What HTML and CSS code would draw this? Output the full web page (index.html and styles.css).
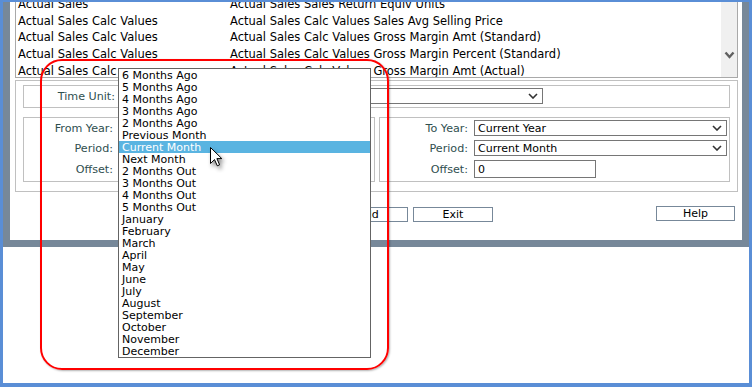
FILE: index.html
```html
<!DOCTYPE html>
<html>
<head>
<meta charset="utf-8">
<link rel="stylesheet" href="styles.css">
</head>
<body>
<div class="screen">
  <div class="dialog">
    <div class="listbox">
      <div class="rows">
        <div class="rows-inner">
          <div class="row"><span class="c1">Actual Sales</span><span>Actual Sales Sales Return Equiv Units</span></div>
          <div class="row"><span class="c1">Actual Sales Calc Values</span><span>Actual Sales Calc Values Sales Avg Selling Price</span></div>
          <div class="row"><span class="c1">Actual Sales Calc Values</span><span>Actual Sales Calc Values Gross Margin Amt (Standard)</span></div>
          <div class="row"><span class="c1">Actual Sales Calc Values</span><span>Actual Sales Calc Values Gross Margin Percent (Standard)</span></div>
          <div class="row"><span class="c1">Actual Sales Calc</span><span class="c2l">Actual Sales Calc Values Gross Margin Amt (Actual)</span></div>
        </div>
      </div>
      <div class="scrollbar">
        <svg width="11" height="8" viewBox="0 0 11 8"><polyline points="1.5,1.5 5.5,6 9.5,1.5" fill="none" stroke="#606060" stroke-width="2.4"/></svg>
      </div>
    </div>

    <div class="panel">
      <div class="box timebox">
        <span class="lbl">Time Unit:</span>
        <div class="select"><span></span><svg class="chev" width="10" height="6" viewBox="0 0 10 6"><polyline points="1,1 5,5 9,1" fill="none" stroke="#333" stroke-width="1.6"/></svg></div>
      </div>
      <div class="pair">
        <div class="box range from">
          <span class="lbl">From Year:</span>
          <div class="select"><span></span><svg class="chev" width="10" height="6" viewBox="0 0 10 6"><polyline points="1,1 5,5 9,1" fill="none" stroke="#333" stroke-width="1.6"/></svg></div>
          <span class="lbl">Period:</span>
          <div class="select"><span></span><svg class="chev" width="10" height="6" viewBox="0 0 10 6"><polyline points="1,1 5,5 9,1" fill="none" stroke="#333" stroke-width="1.6"/></svg></div>
          <span class="lbl">Offset:</span>
          <div class="input"></div>
        </div>
        <div class="box range to">
          <span class="lbl">To Year:</span>
          <div class="select"><span>Current Year</span><svg class="chev" width="10" height="6" viewBox="0 0 10 6"><polyline points="1,1 5,5 9,1" fill="none" stroke="#333" stroke-width="1.6"/></svg></div>
          <span class="lbl">Period:</span>
          <div class="select"><span>Current Month</span><svg class="chev" width="10" height="6" viewBox="0 0 10 6"><polyline points="1,1 5,5 9,1" fill="none" stroke="#333" stroke-width="1.6"/></svg></div>
          <span class="lbl">Offset:</span>
          <div class="input">0</div>
        </div>
      </div>
    </div>

    <div class="buttons">
      <div class="btn">Add</div>
      <div class="btn">Exit</div>
      <div class="btn help">Help</div>
    </div>
  </div>

  <div class="dropdown">
    <div class="opt">6 Months Ago</div>
    <div class="opt">5 Months Ago</div>
    <div class="opt">4 Months Ago</div>
    <div class="opt">3 Months Ago</div>
    <div class="opt">2 Months Ago</div>
    <div class="opt">Previous Month</div>
    <div class="opt sel">Current Month</div>
    <div class="opt">Next Month</div>
    <div class="opt">2 Months Out</div>
    <div class="opt">3 Months Out</div>
    <div class="opt">4 Months Out</div>
    <div class="opt">5 Months Out</div>
    <div class="opt">January</div>
    <div class="opt">February</div>
    <div class="opt">March</div>
    <div class="opt">April</div>
    <div class="opt">May</div>
    <div class="opt">June</div>
    <div class="opt">July</div>
    <div class="opt">August</div>
    <div class="opt">September</div>
    <div class="opt">October</div>
    <div class="opt">November</div>
    <div class="opt">December</div>
  </div>

  <div class="ring"></div>

  <svg class="cursor" width="13" height="20" viewBox="0 0 13 20">
    <path d="M0.5 0.5 L0.5 16.5 L4.5 12.6 L7.3 18.8 L9.6 17.8 L6.9 11.6 L11.8 11.6 Z" fill="#fff" stroke="#000" stroke-width="1" stroke-linejoin="miter"/>
  </svg>
</div>
</body>
</html>
```

FILE: styles.css
```css
* { box-sizing: border-box; }
html, body { margin: 0; padding: 0; background: #fff; }
body {
  font-family: "DejaVu Sans", Verdana, sans-serif;
  font-size: 11px;
  color: #000;
}
.screen {
  position: relative;
  width: 752px;
  height: 387px;
  border-style: solid;
  border-color: #5a8ed6;
  border-width: 2px 3px 4px 3px;
  background: #fff;
  overflow: hidden;
}
.dialog {
  height: 245px;
  border: 7px solid #778899;
  border-top: 0;
  background: #fff;
  display: flex;
  flex-direction: column;
}
.listbox {
  margin: 0 4px 0 5px;
  height: 76px;
  border: 1px solid #a9a9a9;
  border-top: 0;
  display: flex;
}
.rows { flex: 1; overflow: hidden; }
.rows-inner { margin-top: -6px; }
.row {
  display: flex;
  height: 16.67px;
  line-height: 16.67px;
  font-size: 11.5px;
  padding-left: 2px;
  white-space: nowrap;
}
.c1 { width: 212px; flex: none; }
.scrollbar {
  width: 16px;
  background: #f0f0f0;
  padding-top: 49px;
  display: flex;
  justify-content: center;
  align-items: flex-start;
}
.panel {
  margin: 2px 4px 0 5px;
  border: 1px solid #c0c0c0;
  padding: 4px 7px 9px 7px;
}
.box { border: 1px solid #c0c0c0; }
.timebox {
  display: grid;
  grid-template-columns: 91px 424px;
  column-gap: 4px;
  padding: 2px 0;
}
.lbl {
  text-align: right;
  color: #2f4f4f;
  font-size: 11.15px;
  line-height: 17px;
  align-self: center;
  white-space: nowrap;
}
.select {
  height: 16px;
  border: 1px solid #767676;
  display: flex;
  align-items: center;
  justify-content: space-between;
  padding: 1px 4px 0 3px;
  line-height: 14px;
  background: #fff;
  white-space: nowrap;
}
.chev { flex: none; margin-top: -1px; }
.input {
  width: 122px;
  height: 18px;
  border: 1px solid #767676;
  padding: 1px 0 0 3px;
  line-height: 15px;
  background: #fff;
}
.pair {
  display: flex;
  gap: 4px;
  margin-top: 9px;
}
.range {
  display: grid;
  row-gap: 4px;
  padding: 2px 0 3px 0;
  grid-template-rows: 16px 16px 18px;
}
.from { width: 352px; grid-template-columns: 89px 252px; column-gap: 5px; }
.to { width: 351px; grid-template-columns: 88px 253px; column-gap: 6px; }
.buttons {
  display: flex;
  gap: 5px;
  margin-top: 15px;
  padding: 0 7px 0 318px;
}
.btn {
  width: 80px;
  height: 15px;
  border: 1px solid #778899;
  line-height: 14px;
  text-align: center;
  background: #fff;
}
.btn.help { margin-left: auto; width: 79px; margin-top: -1px; }
.dropdown {
  position: absolute;
  left: 115px;
  top: 66px;
  width: 253px;
  border: 1px solid #646464;
  background: #fff;
}
.opt {
  height: 12px;
  line-height: 11px;
  padding: 1px 0 0 3px;
  white-space: nowrap;
}
.opt.sel { background: #5ab4e1; color: #fff; }
.ring {
  position: absolute;
  left: 37px;
  top: 57px;
  width: 349px;
  height: 311px;
  border: 2px solid #ff0000;
  border-radius: 22px;
  box-shadow: 1px 1px 2px rgba(0,0,0,0.3);
}
.cursor {
  position: absolute;
  left: 207px;
  top: 145px;
  filter: drop-shadow(2px 3px 2px rgba(0,0,0,0.45));
}
```
